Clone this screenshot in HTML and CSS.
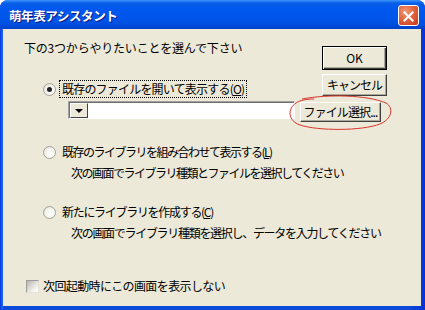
FILE: index.html
```html
<!DOCTYPE html>
<html>
<head>
    <title>萌年表アシスタント</title>
    <link rel="stylesheet" href="styles.css">
</head>
<body>
    <div class="window">
        <div class="titlebar">
            <span class="titlebar__text">萌年表アシスタント</span>
            <span class="titlebar__close">
                <svg width="21" height="21" viewBox="0 0 21 21">
                    <path d="M6 6 L15 15 M15 6 L6 15" stroke="#fff" stroke-width="2.2" stroke-linecap="square"/>
                </svg>
            </span>
        </div>
        <div class="dialog">
            <div class="dialog__main">
                <div class="intro">下の3つからやりたいことを選んで下さい</div>

                <div class="option">
                    <span class="radio radio--checked"></span>
                    <span class="option__label option__label--focus">既存のファイルを開いて表示する(<u>O</u>)</span>
                </div>
                <div class="filerow">
                    <div class="combo">
                        <span class="combo__arrow"></span>
                        <span class="combo__field"></span>
                    </div>
                    <button class="btn btn--file">ファイル選択...</button>
                </div>

                <div class="option option--second">
                    <span class="radio"></span>
                    <span class="option__label label--l">既存のライブラリを組み合わせて表示する(<u>L</u>)</span>
                </div>
                <div class="hint">次の画面でライブラリ種類とファイルを選択してください</div>

                <div class="option option--third">
                    <span class="radio"></span>
                    <span class="option__label label--c">新たにライブラリを作成する(<u>C</u>)</span>
                </div>
                <div class="hint hint--long">次の画面でライブラリ種類を選択し、データを入力してください</div>

                <div class="startup">
                    <span class="checkbox"></span>
                    <span class="startup__label">次回起動時にこの画面を表示しない</span>
                </div>
            </div>
            <div class="dialog__side">
                <button class="btn btn--default">OK</button>
                <button class="btn btn--cancel">キャンセル</button>
            </div>

            <svg class="mark" width="106" height="36" viewBox="0 0 106 36">
                <path d="M14 4 C40 -1 80 0 98 8 C106 13 104 24 92 29 C74 36 30 36 12 30 C0 26 -1 14 8 8 C12 5 20 4 26 4"
                      fill="none" stroke="#d9342b" stroke-width="1"/>
            </svg>
        </div>
    </div>
</body>
</html>
```

FILE: styles.css
```css
*, ::after, ::before {
    box-sizing: border-box;
}

body {
    margin: 0;
    background: #fff;
    font-family: "Noto Sans CJK JP", "DejaVu Sans", sans-serif;
    font-size: 12px;
    color: #000;
}

.window {
    width: 425px;
    height: 310px;
    display: flex;
    flex-direction: column;
    background: linear-gradient(to right, #0831d9, #166aee 2px, #0b4bd8 4px, #0b4bd8 96%, #0831d9);
    border-radius: 8px 8px 0 0;
    padding: 0 4px 4px 3px;
}

.titlebar {
    height: 29px;
    flex: none;
    display: flex;
    align-items: center;
    justify-content: space-between;
    margin: 0 -4px 0 -3px;
    padding: 0 6px 0 9px;
    border-radius: 8px 8px 0 0;
    background: linear-gradient(to bottom, #3d95ff 0, #0a5fe6 3px, #0058ee 8px, #0055ea 18px, #0050e0 24px, #0040c8 29px);
}

.titlebar__text {
    color: #fff;
    font-weight: bold;
    font-size: 12.5px;
    letter-spacing: -0.4px;
    text-shadow: 1px 1px #0a1883;
    padding-top: 1px;
}

.titlebar__close {
    width: 21px;
    height: 21px;
    margin-top: 1px;
    border: 1px solid #fff;
    border-radius: 3px;
    background: radial-gradient(circle at 35% 30%, #f29a7a 0, #e2643f 45%, #c8371b 100%);
    display: flex;
}

.dialog {
    flex: 1;
    position: relative;
    display: flex;
    background: #ece9d8;
}

.dialog__main {
    flex: 1;
    min-width: 0;
    padding: 12px 0 0 21px;
}

.intro {
    line-height: 14px;
    letter-spacing: -0.2px;
}

.option {
    display: flex;
    align-items: center;
    height: 18px;
    margin: 25px 0 0 19px;
}

.option--second {
    margin-top: 21px;
}

.option--third {
    margin-top: 23px;
}

.option__label {
    margin-left: 3px;
    padding: 1px 2px;
    line-height: 14px;
    letter-spacing: -0.8px;
    border: 1px dotted transparent;
    white-space: nowrap;
}

.option__label--focus {
    border-color: #000;
}

.label--l {
    letter-spacing: -1.5px;
}

.label--c {
    letter-spacing: -1.3px;
}

.option__label u {
    text-decoration: underline;
    text-underline-offset: 1px;
}

.radio {
    width: 13px;
    height: 13px;
    flex: none;
    border-radius: 50%;
    border: 1px solid #a6a397;
    background: radial-gradient(circle at 65% 65%, #fff 0, #f4f3ee 55%, #d9d6c8 100%);
    display: flex;
    align-items: center;
    justify-content: center;
}

.radio--checked::after {
    content: "";
    width: 5px;
    height: 5px;
    border-radius: 50%;
    background: #222;
}

.filerow {
    display: flex;
    align-items: flex-start;
    gap: 5px;
    margin: 3px 0 0 44px;
}

.combo {
    width: 227px;
    height: 18px;
    flex: none;
    display: flex;
    border: 1px solid;
    border-color: #a0a0a0 #fff #fff #a0a0a0;
    box-shadow: inset 1px 1px #6f6f6f;
    background: #fff;
}

.combo__arrow {
    width: 18px;
    margin: 1px 0 0 1px;
    flex: none;
    background: #ece9d8;
    border: 1px solid;
    border-color: #fff #404040 #404040 #fff;
    display: flex;
    align-items: center;
    justify-content: center;
}

.combo__arrow::after {
    content: "";
    border-left: 4px solid transparent;
    border-right: 4px solid transparent;
    border-top: 4px solid #000;
}

.combo__field {
    flex: 1;
}

.btn {
    font-family: inherit;
    font-size: 12px;
    color: #000;
    background: #ece9d8;
    padding: 0;
    border: 1px solid;
    border-color: #fff #404040 #404040 #fff;
    box-shadow: inset -1px -1px #aca899;
    line-height: 14px;
    white-space: nowrap;
}

.btn--file {
    width: 81px;
    height: 20px;
    flex: none;
    margin-top: 1px;
    letter-spacing: -0.9px;
}

.dialog__side {
    width: 65px;
    flex: none;
    margin-right: 34px;
    padding-top: 17px;
    display: flex;
    flex-direction: column;
    gap: 4px;
}

.btn--default {
    height: 24px;
    border: 1px solid #000;
    box-shadow: inset 1px 1px #fff, inset -1px -1px #404040, inset -2px -2px #aca899;
}

.btn--cancel {
    height: 22px;
    letter-spacing: -1px;
}

.hint {
    margin: 5px 0 0 47px;
    line-height: 14px;
    letter-spacing: -1.5px;
    white-space: nowrap;
}

.hint--long {
    letter-spacing: -1.3px;
}

.startup {
    display: flex;
    align-items: center;
    margin: 39px 0 0 2px;
    height: 14px;
}

.checkbox {
    width: 13px;
    height: 13px;
    flex: none;
    border: 1px solid #9d9d9d;
    border-right-color: #e4e2d8;
    border-bottom-color: #e4e2d8;
    background: linear-gradient(135deg, #b8b6ad 0, #f2f1ec 70%, #fff 100%);
}

.startup__label {
    margin-left: 4px;
    line-height: 14px;
    letter-spacing: -0.6px;
}

.mark {
    position: absolute;
    left: 285px;
    top: 66px;
}
```
